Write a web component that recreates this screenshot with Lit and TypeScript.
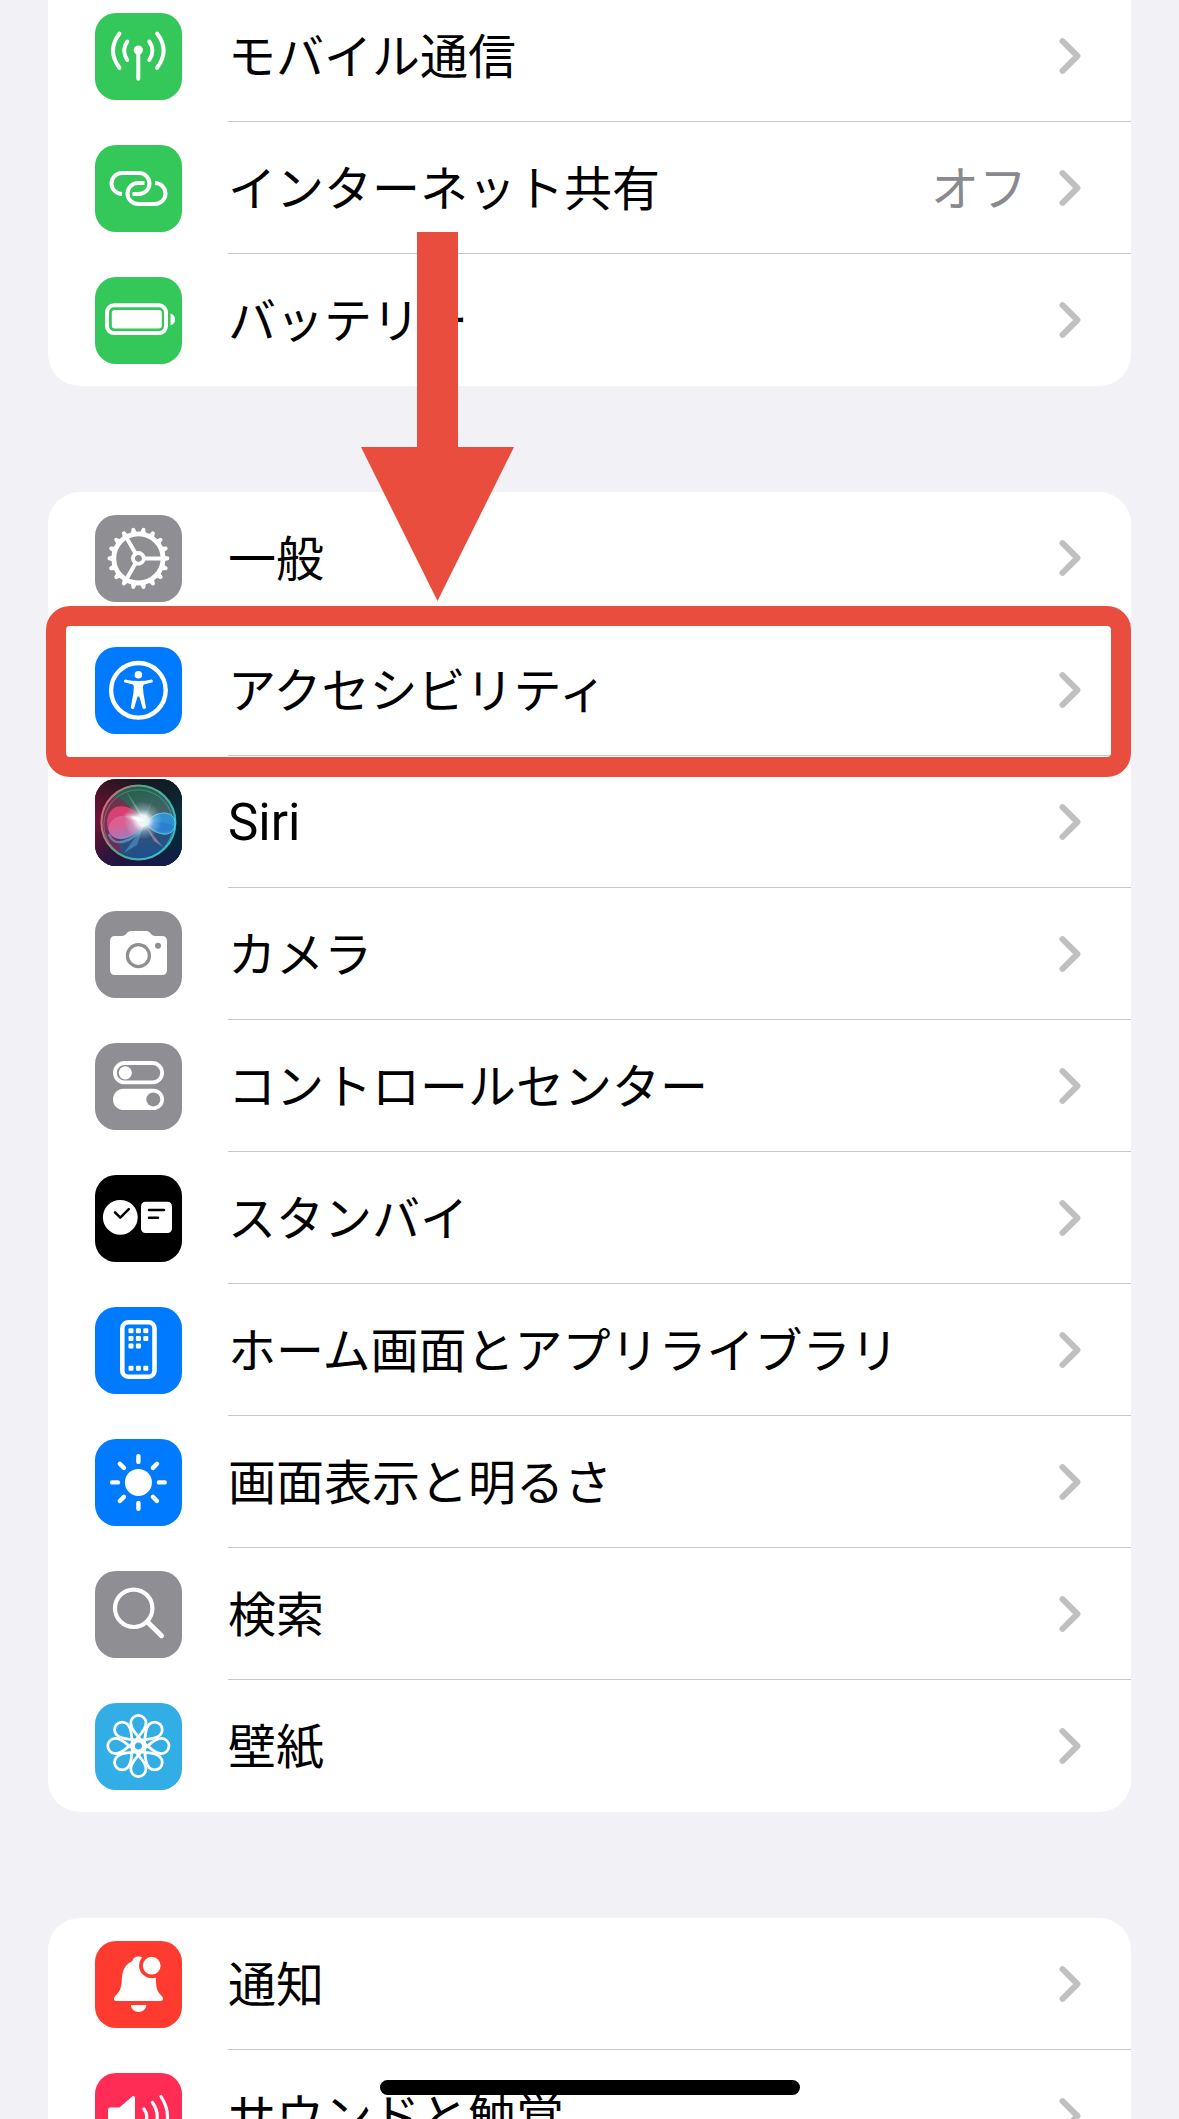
import { LitElement, html, svg, css, nothing, SVGTemplateResult } from "lit";
import { customElement, property } from "lit/decorators.js";
import { classMap } from "lit/directives/class-map.js";

interface Item {
  icon: string;
  tone: string;
  label: string;
  value?: string;
  latin?: boolean;
  marked?: boolean;
}

const GROUPS: Item[][] = [
  [
    { icon: "antenna", tone: "green", label: "モバイル通信" },
    { icon: "link", tone: "green", label: "インターネット共有", value: "オフ" },
    { icon: "battery", tone: "green", label: "バッテリー" },
  ],
  [
    { icon: "gear", tone: "gray", label: "一般" },
    { icon: "person", tone: "blue", label: "アクセシビリティ", marked: true },
    { icon: "siri", tone: "black", label: "Siri", latin: true },
    { icon: "camera", tone: "gray", label: "カメラ" },
    { icon: "switches", tone: "gray", label: "コントロールセンター" },
    { icon: "standby", tone: "black", label: "スタンバイ" },
    { icon: "home", tone: "blue", label: "ホーム画面とアプリライブラリ" },
    { icon: "sun", tone: "blue", label: "画面表示と明るさ" },
    { icon: "search", tone: "gray", label: "検索" },
    { icon: "flower", tone: "cyan", label: "壁紙" },
  ],
  [
    { icon: "bell", tone: "red", label: "通知" },
    { icon: "speaker", tone: "pink", label: "サウンドと触覚" },
  ],
];

const steps = (count: number) => Array.from({ length: count }, (_, i) => (360 / count) * i);

const GLYPHS: Record<string, SVGTemplateResult> = {
  antenna: svg`
    <g class="line" stroke-width="4">
      <path d="M43.3 37V65.7"/>
      <path d="M32.3 28.5Q26 37.5 32.3 47"/><path d="M54.3 28.5Q60.6 37.5 54.3 47"/>
      <path d="M24.5 20.5Q11.5 37.5 24.5 54.8"/><path d="M62.1 20.5Q75.1 37.5 62.1 54.8"/>
    </g>
    <circle class="solid" cx="43.3" cy="37" r="4.6"/>`,
  link: svg`
    <g class="line butt" stroke-width="4">
      <path d="M27 49A10.5 10.5 0 0 1 27 28H44A10.5 10.5 0 0 1 44 49H37.5"/>
      <path d="M60 38A10.5 10.5 0 0 1 60 59H43A10.5 10.5 0 0 1 43 38H49.5"/>
    </g>`,
  battery: svg`
    <rect class="line" x="12" y="28.3" width="59" height="27.8" rx="7" stroke-width="4"/>
    <rect class="solid" x="16.8" y="33" width="50" height="18.6" rx="3"/>
    <path class="solid" d="M75.5 36.4C81.5 38 81.5 47 75.5 48.2Z"/>`,
  gear: svg`
    <g transform="translate(43.4 43.4)">
      <circle class="line" r="24.6" stroke-width="4.8"/>
      ${steps(18).map(a => svg`<path class="solid" transform="rotate(${a})" d="M25-3.2L30.4-1.6Q31.6 0 30.4 1.6L25 3.2Z"/>`)}
      ${steps(3).map(a => svg`<path class="line" transform="rotate(${a})" d="M6 0H24" stroke-width="4"/>`)}
      <circle class="line" r="5.4" stroke-width="3.8"/>
    </g>`,
  person: svg`
    <circle class="line" cx="43.4" cy="43.3" r="27.3" stroke-width="4.4"/>
    <circle class="solid" cx="43.4" cy="27.8" r="3.8"/>
    <path class="solid" d="M30 32.6Q43.4 35.6 56.8 32.6Q58.6 33.6 57.6 35.2L49 37.4Q48 38 48 40L48.4 46L51 60.6Q50 63 47.8 61.6L44.2 49.4H42.6L39 61.6Q36.8 63 35.8 60.6L38.4 46L38.8 40Q38.8 38 37.8 37.4L29.2 35.2Q28.2 33.6 30 32.6Z"/>`,
  siri: svg`
    <defs>
      <linearGradient id="base" x1="0" y1="0.2" x2="1" y2="0.5">
        <stop offset="0" stop-color="#86103c"/><stop offset="0.5" stop-color="#2a1836"/><stop offset="1" stop-color="#05303c"/>
      </linearGradient>
      <linearGradient id="shade" x1="0.3" y1="0" x2="0.4" y2="1">
        <stop offset="0" stop-color="#04170f" stop-opacity="0.6"/><stop offset="0.45" stop-color="#04170f" stop-opacity="0"/><stop offset="1" stop-color="#1a1252" stop-opacity="0.65"/>
      </linearGradient>
      <linearGradient id="orb" x1="0.4" y1="0" x2="0.6" y2="1">
        <stop offset="0" stop-color="#1c6a4c"/><stop offset="0.4" stop-color="#4a6a6c"/><stop offset="0.65" stop-color="#34567c"/><stop offset="1" stop-color="#1b569c"/>
      </linearGradient>
      <linearGradient id="rim" x1="0" y1="0.1" x2="1" y2="0.5">
        <stop offset="0" stop-color="#ee5f80"/><stop offset="0.45" stop-color="#58a585"/><stop offset="1" stop-color="#34bfc4"/>
      </linearGradient>
      <linearGradient id="rose" x1="0" y1="0" x2="0.3" y2="1">
        <stop offset="0" stop-color="#ea3f6c"/><stop offset="0.6" stop-color="#d2467e"/><stop offset="1" stop-color="#7a70c4"/>
      </linearGradient>
      <radialGradient id="glow">
        <stop offset="0" stop-color="#fff"/><stop offset="0.28" stop-color="#fff" stop-opacity="0.9"/><stop offset="0.6" stop-color="#d4f0f4" stop-opacity="0.35"/><stop offset="1" stop-color="#d4f0f4" stop-opacity="0"/>
      </radialGradient>
    </defs>
    <rect width="87" height="87" fill="url(#base)"/>
    <rect width="87" height="87" fill="url(#shade)"/>
    <circle cx="43.4" cy="43.4" r="37" fill="url(#orb)" opacity="0.9"/>
    <path d="M43 43C34 20 20 14 14 22C6 32 4 48 10 60C14 68 20 73 28 76C18 62 30 52 43 43Z" fill="#8e1a48" opacity="0.65"/>
    <circle cx="43.4" cy="43.4" r="37" fill="none" stroke="url(#rim)" stroke-width="2"/>
    <circle cx="43.4" cy="45.4" r="34.6" fill="none" stroke="url(#rim)" stroke-width="1" opacity="0.6"/>
    <path d="M50 44C44 31 30 25 21 28C12 32 10 44 14 53C20 65 38 62 50 44Z" fill="url(#rose)" opacity="0.92"/>
    <path d="M50 44C38 34 15 34 14 50C17 64 38 62 50 44Z" fill="#f08ab4" stroke="#f7b0cc" stroke-width="0.7" opacity="0.4"/>
    <path d="M14 55C18 68 36 66 50 45" fill="none" stroke="#6fb4dc" stroke-width="2.4" opacity="0.6"/>
    <path d="M50 44C56 37 63 34 69 34C76 34 80 38 80 45C80 52 74 56 68 55C61 54 55 50 50 44Z" fill="#2f96dc" stroke="#74d0f0" stroke-width="1" opacity="0.9"/>
    <path d="M52 45C60 42 70 42 79 47C76 55 62 55 52 45Z" fill="#2a70cc" opacity="0.45"/>
    <path d="M49 46L29 74L42 66Z" fill="#58b4e4" opacity="0.45"/>
    <path d="M50 46L68 68L59 62Z" fill="#d79cb8" opacity="0.55"/>
    <path d="M48 43L31 12L49 38L58 20Z" fill="#b6e6d0" opacity="0.35"/>
    <circle cx="48" cy="41.5" r="19" fill="url(#glow)"/>
    <ellipse cx="43" cy="40" rx="16" ry="5" fill="url(#glow)" transform="rotate(18 43 40)"/>`,
  camera: svg`
    <path class="solid" d="M20 25H27Q29.5 25 31 23.2L32.3 21.6Q33.6 20 36 20H51.5Q53.5 20 54.8 21.6L56.5 23.6Q57.7 25 60 25H67Q72 25 72 30V59Q72 64 67 64H20Q15 64 15 59V30Q15 25 20 25Z"/>
    <circle cx="43.4" cy="44.7" r="11" fill="none" stroke="#8e8e93" stroke-width="3.2"/>
    <circle cx="63" cy="34.7" r="3" fill="#8e8e93"/>`,
  switches: svg`
    <rect class="line" x="19.9" y="20" width="47.2" height="19.4" rx="9.7" stroke-width="3.8"/>
    <circle class="solid" cx="30.3" cy="29.8" r="6.6"/>
    <rect class="solid" x="18" y="45.7" width="51" height="21.4" rx="10.7"/>
    <circle cx="58.3" cy="56.4" r="7" fill="#8e8e93"/>`,
  standby: svg`
    <circle class="solid" cx="25.3" cy="42.3" r="17.4"/>
    <rect class="solid" x="46" y="26.7" width="31" height="31.3" rx="4.5"/>
    <g fill="none" stroke="#000" stroke-width="2.5" stroke-linecap="round" stroke-linejoin="round">
      <path d="M20 37.3L25.3 42.7L33.8 34.2"/><path d="M54 35H69"/><path d="M54 42.7H63"/>
    </g>`,
  home: svg`
    <rect class="line" x="27.3" y="15.3" width="32.2" height="54.4" rx="6" stroke-width="4.6"/>
    ${[[36, 23.7], [43.4, 23.7], [50.8, 23.7], [36, 31.4], [43.4, 31.4], [50.8, 31.4], [36, 39], [43.4, 39], [36, 61.3], [43.4, 61.3], [50.8, 61.3]].map(
      ([x, y]) => svg`<rect class="solid" x=${x - 2.5} y=${y - 2.5} width="5" height="5" rx="1"/>`)}`,
  sun: svg`
    <g transform="translate(43.4 43.4)">
      <circle class="solid" r="13.5"/>
      ${steps(8).map(a => svg`<path class="line" transform="rotate(${a})" d="M20.5 0H26.3" stroke-width="4.4"/>`)}
    </g>`,
  search: svg`
    <circle class="line" cx="38.7" cy="37.3" r="18.7" stroke-width="4.2"/>
    <path class="line" d="M52.5 51L66.5 64.7" stroke-width="5"/>`,
  flower: svg`
    <g transform="translate(43.4 43)">
      ${steps(8).map(a => svg`<path class="line" transform="rotate(${a})" stroke-width="2.8" d="M3-4.5C1-10-7.6-15-7.6-23A7.6 7.6 0 0 1 7.6-23C7.6-15-1-10-3-4.5"/>`)}
      <circle class="line" r="5" stroke-width="2.8"/>
    </g>`,
  bell: svg`
    <path class="solid" d="M43.4 15.5C39.8 15.5 38 17.6 37.2 20.2C30 23.2 27.2 30 26.9 37C26.5 46 25.5 50 21 54.2C18 57 18.5 60 21.6 60H65.2C68.6 60 69 57 66 54.2C61.5 50 61.2 46 60.9 37L60.6 32C60 26 55 21.5 49.6 20.2C48.8 17.6 47 15.5 43.4 15.5Z"/>
    <path class="solid" d="M35.8 64H51.4C50.4 73.3 36.8 73.3 35.8 64Z"/>
    <circle cx="56.7" cy="24.7" r="12.6" fill="#ff3b30"/>
    <circle class="solid" cx="56.7" cy="24.7" r="8.9"/>`,
  speaker: svg`
    <path class="solid" d="M15.5 34.5H24.5L36.5 24Q40 21.5 40 25.5V61.5Q40 65.5 36.5 63L24.5 52.5H15.5Q13 52.5 13 50V37Q13 34.5 15.5 34.5Z"/>
    <g class="line" stroke-width="3.2">
      <path d="M49 36Q54.5 43.5 49 51"/><path d="M57.5 29.5Q67 43.5 57.5 57.5"/><path d="M66 23.5Q79 43.5 66 63.5"/>
    </g>`,
};

@customElement("settings-row")
class SettingsRow extends LitElement {
  @property({ attribute: false }) item!: Item;
  @property({ type: Boolean }) last = false;

  static styles = css`
    :host {
      display: block;
      position: relative;
    }
    .row {
      display: flex;
      gap: 46px;
      padding-left: 47px;
      color: #000;
      text-decoration: none;
    }
    .icon {
      flex: none;
      width: 87px;
      height: 87px;
      margin: 23px 0 22px;
      border-radius: 21px;
      overflow: hidden;
    }
    .icon svg {
      display: block;
      width: 100%;
      height: 100%;
    }
    .green { background: #34c759; }
    .gray { background: #8e8e93; }
    .blue { background: #007aff; }
    .black { background: #000; }
    .cyan { background: #32ade6; }
    .red { background: #ff3b30; }
    .pink { background: #ff2d55; }
    .solid { fill: #fff; }
    .line {
      fill: none;
      stroke: #fff;
      stroke-linecap: round;
      stroke-linejoin: round;
    }
    .butt { stroke-linecap: butt; }
    .body {
      flex: 1;
      min-width: 0;
      display: flex;
      align-items: center;
      gap: 32px;
      padding-right: 50px;
      border-bottom: 1px solid #c6c6c8;
      font-size: 48px;
      line-height: 64px;
    }
    .body.last { border-bottom-color: transparent; }
    .label,
    .value { padding-top: 2px; }
    .label {
      flex: 1;
      white-space: nowrap;
    }
    .latin {
      font-family: Roboto, sans-serif;
      font-size: 51px;
    }
    .value { color: #8a8a8e; }
    .chevron {
      flex: none;
      width: 22px;
      height: 36px;
    }
    .frame {
      position: absolute;
      inset: -18px 0 -21px -2px;
      border: 20px solid #e94d3e;
      border-radius: 24px;
      pointer-events: none;
    }
    .arrow {
      position: absolute;
      left: 313px;
      bottom: 155px;
      width: 153px;
      height: 369px;
      pointer-events: none;
    }
  `;

  render() {
    const { icon, tone, label, value, latin, marked } = this.item;
    return html`
      <a class="row" href="#${icon}">
        <span class="icon ${tone}"><svg viewBox="0 0 87 87" aria-hidden="true">${GLYPHS[icon]}</svg></span>
        <span class=${classMap({ body: true, last: this.last })}>
          <span class=${classMap({ label: true, latin: !!latin })}>${label}</span>
          ${value ? html`<span class="value">${value}</span>` : nothing}
          <svg class="chevron" viewBox="0 0 22 36" aria-hidden="true">
            <path d="M3.5 3.2L18.4 18L3.5 32.8" fill="none" stroke="#c0c0c0" stroke-width="6" stroke-linecap="round" stroke-linejoin="round"/>
          </svg>
        </span>
      </a>
      ${marked
        ? html`<div class="frame"></div>
            <svg class="arrow" viewBox="0 0 153 369" aria-hidden="true">
              <path d="M56 0H97V215H153L76.5 369L0 215H56Z" fill="#e94d3e"/>
            </svg>`
        : nothing}
    `;
  }
}

@customElement("app-root")
class AppRoot extends LitElement {
  static styles = css`
    :host {
      display: block;
      height: 100vh;
      overflow: hidden;
      background: #f2f1f6;
      font-family: Inter, "Noto Sans CJK JP", sans-serif;
    }
    .list {
      display: flex;
      flex-direction: column;
      gap: 106px;
      margin-top: -10px;
      padding: 0 48px;
    }
    .group {
      margin: 0;
      padding: 0;
      list-style: none;
      background: #fff;
      border-radius: 32px;
    }
    .group:first-child {
      border-top-left-radius: 0;
      border-top-right-radius: 0;
    }
    .raised,
    .marked {
      position: relative;
      z-index: 1;
    }
    .indicator {
      position: fixed;
      left: 50%;
      bottom: 24px;
      z-index: 2;
      width: 420px;
      height: 15px;
      border-radius: 8px;
      background: #000;
      transform: translateX(-50%);
    }
  `;

  render() {
    return html`
      <main class="list">
        ${GROUPS.map(group => html`
          <ul class=${classMap({ group: true, raised: group.some(i => i.marked) })}>
            ${group.map((item, i) => html`
              <li class=${classMap({ marked: !!item.marked })}>
                <settings-row .item=${item} ?last=${i === group.length - 1}></settings-row>
              </li>`)}
          </ul>`)}
      </main>
      <div class="indicator"></div>
    `;
  }
}
